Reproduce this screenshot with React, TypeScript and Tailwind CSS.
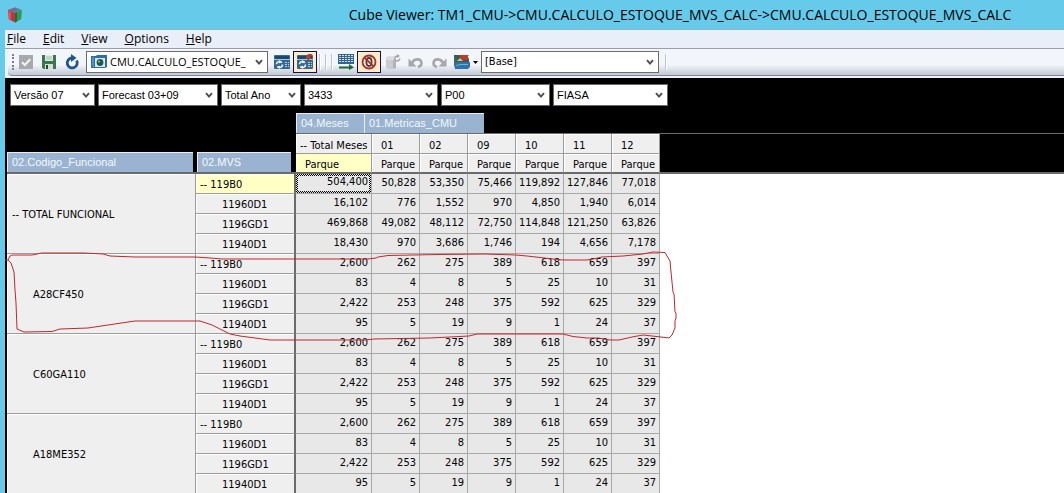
import type { ReactNode } from 'react'

// ─── Data ─────────────────────────────────────────────────────────────────────

type Block = {
  label: string
  total?: boolean
  rows: { name: string; values: string[] }[]
}

const months = ['01', '02', '09', '10', '11', '12']

const totals = [
  { name: '119B0', values: ['504,400', '50,828', '53,350', '75,466', '119,892', '127,846', '77,018'] },
  { name: '11960D1', values: ['16,102', '776', '1,552', '970', '4,850', '1,940', '6,014'] },
  { name: '1196GD1', values: ['469,868', '49,082', '48,112', '72,750', '114,848', '121,250', '63,826'] },
  { name: '11940D1', values: ['18,430', '970', '3,686', '1,746', '194', '4,656', '7,178'] },
]

const detail = [
  { name: '119B0', values: ['2,600', '262', '275', '389', '618', '659', '397'] },
  { name: '11960D1', values: ['83', '4', '8', '5', '25', '10', '31'] },
  { name: '1196GD1', values: ['2,422', '253', '248', '375', '592', '625', '329'] },
  { name: '11940D1', values: ['95', '5', '19', '9', '1', '24', '37'] },
]

const blocks: Block[] = [
  { label: 'TOTAL FUNCIONAL', total: true, rows: totals },
  { label: 'A28CF450', rows: detail },
  { label: 'C60GA110', rows: detail },
  { label: 'A18ME352', rows: detail },
]

const filters = [
  { name: 'Versão', value: 'Versão 07', width: 'w-[85px]' },
  { name: 'Cenário', value: 'Forecast 03+09', width: 'w-[120px]' },
  { name: 'Ano', value: 'Total Ano', width: 'w-[80px]' },
  { name: 'Conta', value: '3433', width: 'w-[134px]' },
  { name: 'Produto', value: 'P00', width: 'w-[109px]' },
  { name: 'Empresa', value: 'FIASA', width: 'w-[115px]' },
]

const menus = ['File', 'Edit', 'View', 'Options', 'Help']

// ─── Icons ────────────────────────────────────────────────────────────────────

function CubeIcon() {
  return (
    <svg className="h-4 w-4" viewBox="0 0 16 16">
      <path d="M8 0.5 15 3 8 6 1 3Z" fill="#5b7f9c" />
      <path d="M8 0.5 11 1.6 4.5 4.4 1 3Z" fill="#83688a" />
      <path d="M1 3 8 6V15.5L1.8 12.2Z" fill="#c9303a" />
      <path d="M15 3 8 6V15.5L14.2 12.2Z" fill="#2f9a55" />
      <path d="M1.5 4 4 5V12.5L2 11.5Z" fill="#e2555a" />
      <path d="M8 6 10 5.2V14.4L8 15.5Z" fill="#1d6b45" />
    </svg>
  )
}

function CheckIcon() {
  return (
    <svg className="h-4 w-4" viewBox="0 0 16 16">
      <rect x="1" y="1" width="14" height="14" fill="#a7a9ac" />
      <path d="M4 8.2 6.8 11 12.2 5.2" fill="none" stroke="#f4f4f4" strokeWidth="2" />
    </svg>
  )
}

function SaveIcon() {
  return (
    <svg className="h-4 w-4" viewBox="0 0 16 16">
      <path d="M1 1H15V15H2.5L1 13.5Z" fill="#387a4c" />
      <rect x="4" y="1" width="8" height="6" fill="#e3e9e4" />
      <path d="M5 3H11M5 5H11" stroke="#aebbb1" />
      <rect x="4" y="10" width="8" height="5" fill="#d5ded7" />
      <rect x="5" y="11" width="2" height="4" fill="#22482f" />
    </svg>
  )
}

function RefreshIcon() {
  return (
    <svg className="h-4 w-4" viewBox="0 0 16 16">
      <path d="M12.6 6.5A5 5 0 1 1 7.5 4" fill="none" stroke="#1e5591" strokeWidth="2.8" />
      <path d="M7 0 12.5 4 7 8Z" fill="#1e5591" />
    </svg>
  )
}

function ViewIcon() {
  return (
    <svg className="h-4 w-4 shrink-0" viewBox="0 0 16 16">
      <path d="M0 2H5L6 1H16V13L14 14H0Z" fill="#2c6fa8" />
      <rect x="4" y="4" width="10" height="9" fill="#dbe9ef" />
      <circle cx="9" cy="8.5" r="3.4" fill="#235a45" />
      <circle cx="8" cy="7.5" r="1.1" fill="#8fc1a2" />
      <path d="M2 3V13" stroke="#7cb4dd" />
    </svg>
  )
}

function RecalcIcon({ auto = false }: { auto?: boolean }) {
  return (
    <svg className="h-4 w-4" viewBox="0 0 16 16">
      <rect x="0" y="1" width="16" height="14" rx="1" fill="#356791" />
      <rect x="1" y="2" width="14" height="3" fill="#1d4870" />
      <path d="M0 5.5H16" stroke="#a4c8df" />
      <path d="M11 8.5H13M14 8.5H15M11 10.5H13M14 10.5H15M11 12.5H13M14 12.5H15" stroke="#b6d6e6" />
      <circle cx="5.5" cy="10.5" r="3" fill="none" stroke="#e6f2f8" strokeWidth="1.6" strokeDasharray="7 2.4" />
      <path d="M5 6 8 8 5 9.5ZM6 15 3 13 6 11.5Z" fill="#e6f2f8" />
      {auto && <path d="M15.5 0H11L8 4.5H11L8.5 8.5 15 3.5H12.5Z" fill="#b5402f" />}
    </svg>
  )
}

function ExportGridIcon() {
  return (
    <svg className="h-4 w-4" viewBox="0 0 16 16">
      <rect x="0" y="0" width="16" height="10" fill="#32648e" />
      <path d="M1 1.5H15M1 3.5H15M1 5.5H15M1 7.5H15" stroke="#d3e4ee" strokeDasharray="2 1" />
      <path d="M1 13.5H12" stroke="#17683b" strokeWidth="2" />
      <path d="M11 10 16 13.5 11 16Z" fill="#17683b" />
    </svg>
  )
}

function SuppressZeroIcon() {
  return (
    <svg className="h-4 w-4" viewBox="0 0 16 16">
      <ellipse cx="8" cy="8" rx="2.6" ry="4" fill="none" stroke="#41434b" strokeWidth="1.8" />
      <circle cx="8" cy="8" r="6.5" fill="none" stroke="#a92d31" strokeWidth="1.8" />
      <path d="M3.4 3.4 12.6 12.6" stroke="#a92d31" strokeWidth="1.8" />
    </svg>
  )
}

function DatabaseIcon() {
  return (
    <svg className="h-4 w-4" viewBox="0 0 16 16">
      <path d="M1 4V13C1 16 11 16 11 13V4Z" fill="#cbccd0" />
      <path d="M8 4H11V14L8 15Z" fill="#b2b3b8" />
      <ellipse cx="6" cy="4" rx="5" ry="2" fill="#dcdde0" />
      <path d="M14.8 4.5A2.5 2.5 0 1 1 12.5 2" fill="#eceef2" stroke="#a3a4a8" strokeWidth="1.4" />
      <path d="M12 0 15 2 12 4Z" fill="#a3a4a8" />
    </svg>
  )
}

function UndoIcon({ flip = false }: { flip?: boolean }) {
  return (
    <svg className={`h-4 w-4 ${flip ? '-scale-x-100' : ''}`} viewBox="0 0 16 16">
      <path d="M4 9.5C5 5 13.5 3 13.5 9.5 13.5 11.5 12 12.5 10 13" fill="none" stroke="#a5a7aa" strokeWidth="2.6" />
      <path d="M0.5 4.5V12.5H8.5Z" fill="#a5a7aa" />
    </svg>
  )
}

function ChartIcon() {
  return (
    <svg className="h-4 w-4" viewBox="0 0 16 16">
      <path d="M0 1H13L15 5V12H0Z" fill="#345a60" />
      <path d="M5 1H15L13 3 15 6H8Z" fill="#bd3a2c" />
      <path d="M0 3H3V10H0Z" fill="#2f6f63" />
      <path d="M3 7 6 4 9 7Z" fill="#e8c06a" />
      <path d="M0 10 4 8H16V13L14 15H1Z" fill="#2e74a8" />
      <path d="M2 11.5 6 10.5H14" fill="none" stroke="#6fb0d8" />
    </svg>
  )
}

// ─── Controls ─────────────────────────────────────────────────────────────────

function Dropdown({ label, value, className, icon }: { label: string; value: string; className: string; icon?: ReactNode }) {
  return (
    <div className={`relative flex h-[22px] shrink-0 items-center border border-[#6b6b6b] bg-white ${className}`}>
      {icon}
      <select aria-label={label} className="h-full min-w-0 flex-1 appearance-none bg-transparent pr-4 pl-[3px] outline-none">
        <option>{value}</option>
      </select>
      <svg className="pointer-events-none absolute right-1 h-[7px] w-2" viewBox="0 0 8 7">
        <path d="M1 1.2 4 4.6 7 1.2" fill="none" stroke="#505050" strokeWidth="2" />
      </svg>
    </div>
  )
}

function ToolButton({ label, active, children }: { label: string; active?: boolean; children: ReactNode }) {
  return (
    <button
      type="button"
      aria-label={label}
      className={`flex h-[22px] shrink-0 items-center justify-center border ${
        active ? 'w-6 border-[#10105c] bg-[#ffebc6]' : 'w-[23px] border-transparent'
      }`}
    >
      {children}
    </button>
  )
}

function Separator() {
  return <span className="h-4 w-[2px] shrink-0 border-r border-white bg-[#bfc4ce]" />
}

function DimensionTile({ className, children }: { className: string; children: ReactNode }) {
  return (
    <div className={`h-5 truncate border-t border-l border-[#e6edf5] bg-[#9ab3d0] pl-1 text-left leading-[19px] text-[#f4f8fc] ${className}`}>
      {children}
    </div>
  )
}

// ─── Toolbar ──────────────────────────────────────────────────────────────────

function Toolbar() {
  return (
    <div className="bg-[#eef3fa] pb-[2px] pl-[3px]">
      <div className="flex h-[27px] items-center rounded-bl border-b border-[#7f8797] bg-linear-to-b from-[#f2f5fa] from-60% to-[#c3c8d3] pl-1">
        <span className="h-4 w-[2px] shrink-0 border-l-2 border-dotted border-[#7b7f88]" />
        <ToolButton label="Apply"><CheckIcon /></ToolButton>
        <ToolButton label="Save"><SaveIcon /></ToolButton>
        <ToolButton label="Refresh"><RefreshIcon /></ToolButton>
        <Dropdown
          label="View name"
          value="CMU.CALCULO_ESTOQUE_"
          className="mr-[2px] ml-[3px] w-[182px] pl-1 font-['Open_Sans',sans-serif] text-[11px]"
          icon={<ViewIcon />}
        />
        <ToolButton label="Recalculate"><RecalcIcon /></ToolButton>
        <ToolButton label="Automatic recalculation" active><RecalcIcon auto /></ToolButton>
        <span className="flex gap-1 pr-px pl-[2px]">
          <Separator />
          <Separator />
          <Separator />
        </span>
        <ToolButton label="Slice to grid"><ExportGridIcon /></ToolButton>
        <ToolButton label="Suppress zeroes" active><SuppressZeroIcon /></ToolButton>
        <ToolButton label="Sandbox"><DatabaseIcon /></ToolButton>
        <ToolButton label="Undo"><UndoIcon /></ToolButton>
        <ToolButton label="Redo"><UndoIcon flip /></ToolButton>
        <ToolButton label="Chart"><ChartIcon /></ToolButton>
        <svg className="h-[3px] w-[5px] shrink-0" viewBox="0 0 5 3">
          <path d="M0 0H5L2.5 3Z" fill="#000" />
        </svg>
        <Dropdown label="Sandbox name" value="[Base]" className="mr-[6px] ml-[3px] w-[178px]" />
        <Separator />
      </div>
    </div>
  )
}

// ─── Grid ─────────────────────────────────────────────────────────────────────

const headCell = 'border-r border-[#9c9c9c] bg-[#efefef] p-0 pt-[3px] text-left font-normal shadow-[inset_1px_1px_0_#fff] whitespace-nowrap'
const valueCell = 'border-r border-b border-[#a8a8a8] bg-[#e8e8e8] p-0 text-right leading-[15px]'

function CubeGrid() {
  return (
    <table className="w-full table-fixed border-separate border-spacing-0">
      <colgroup>
        <col className="w-[189px]" />
        <col className="w-[100px]" />
        <col className="w-[76px]" />
        {months.map((m) => <col key={m} className="w-12" />)}
        <col />
      </colgroup>
      <thead className="bg-black leading-[15px]">
        <tr className="h-[21px]">
          <td colSpan={2} className="p-0" />
          <th colSpan={8} className="border-b border-[#6b6b6b] p-0 font-['Liberation_Sans',Arial,sans-serif] font-normal">
            <div className="flex">
              <DimensionTile className="w-[68px]">04.Meses</DimensionTile>
              <DimensionTile className="w-[120px]">01.Metricas_CMU</DimensionTile>
            </div>
          </th>
        </tr>
        <tr className="h-5">
          <th rowSpan={2} className="border-b-2 border-[#6b6b6b] p-0 pr-[3px] align-bottom font-['Liberation_Sans',Arial,sans-serif] font-normal">
            <DimensionTile className="w-full">02.Codigo_Funcional</DimensionTile>
          </th>
          <th rowSpan={2} className="border-b-2 border-[#6b6b6b] p-0 pr-[5px] pl-px align-bottom font-['Liberation_Sans',Arial,sans-serif] font-normal">
            <DimensionTile className="w-full">02.MVS</DimensionTile>
          </th>
          <th className={`${headCell} border-b pl-1`}>-- Total Meses</th>
          {months.map((m) => <th key={m} className={`${headCell} border-b pl-[9px]`}>{m}</th>)}
          <td className="p-0" />
        </tr>
        <tr className="h-5">
          <th className="border-r border-b-2 border-r-[#9c9c9c] border-b-[#6b6b6b] bg-[#ffffc6] p-0 pt-[3px] pl-[9px] text-left font-normal">Parque</th>
          {months.map((m) => (
            <th key={m} className={`${headCell} border-b-2 border-b-[#6b6b6b] pl-[9px]`}>Parque</th>
          ))}
          <td className="border-b-2 border-[#6b6b6b] p-0" />
        </tr>
      </thead>
      <tbody className="leading-4">
        {blocks.map((block) =>
          block.rows.map((row, r) => {
            const first = block.total && r === 0
            return (
              <tr key={row.name} className="h-5">
                {r === 0 && (
                  <th rowSpan={4} className={`${headCell} border-b ${block.total ? 'pl-[5px]' : 'pl-[26px]'}`}>
                    {block.total ? `-- ${block.label}` : block.label}
                  </th>
                )}
                <th
                  className={`border-r-2 border-b border-r-[#6b6b6b] border-b-[#9c9c9c] p-0 pt-[3px] text-left font-normal shadow-[inset_1px_1px_0_#fff] ${
                    first ? 'bg-[#ffffc6]' : 'bg-[#efefef]'
                  } ${r === 0 ? 'pl-1' : 'pl-[26px]'}`}
                >
                  {r === 0 ? `-- ${row.name}` : row.name}
                </th>
                {row.values.map((value, c) =>
                  first && c === 0 ? (
                    <td key={c} className={valueCell}>
                      {/* selected cell: checkered focus frame */}
                      <div className="bg-[repeating-conic-gradient(#000_0_25%,#e8e8e8_0_50%)] bg-size-[2px_2px] p-[2px]">
                        <div className="bg-[#e8e8e8] pr-px pb-[3px] leading-3">{value}</div>
                      </div>
                    </td>
                  ) : (
                    <td key={c} className={`${valueCell} pr-[3px] pb-[2px]`}>{value}</td>
                  )
                )}
                <td className="bg-white p-0" />
              </tr>
            )
          })
        )}
      </tbody>
    </table>
  )
}

// Freehand pen outline around the A28CF450 block
function PenMark() {
  return (
    <svg className="pointer-events-none absolute top-0 left-0 h-[240px] w-[680px] overflow-visible" viewBox="7 113 680 240">
      <path
        d="M5 260 8 260 10 256 12 255 32 255 42 253 83 253 103 254 110 256 135 257 195 257 210 258 222 259 368 259 376 258 378 257 388 255.5 438 254.5 484 254 516 255 527 256 540 257.5 553 259 563 260 587 260 598 258 602 257 623 256 633 255 643 254 653 252 665 252.5 667 256 670 261 671 272 673 292 674 294 675 312 676 313 676 318 675 321 675 328 672 335 669 338 661 337 652 336 643 335 632 337 619 340 610 340 598 338 587 338 573 336.5 563 334 477 334 469 336 450 337 430 338 374 339 365 340 270 340 240 336 230 334 220 329 212 325 200 321 135 321 108 325 88 328 60 329 52 331.5 24 332 17 329 16 303 15 290 14 272 11 263 8 260"
        fill="none"
        stroke="#c1272d"
      />
    </svg>
  )
}

// ─── Main Component ───────────────────────────────────────────────────────────

export default function App() {
  return (
    <div className="flex h-screen flex-col overflow-hidden bg-[#66cbea] font-['DejaVu_Sans_Condensed','DejaVu_Sans',sans-serif] text-[11px] text-black">
      <header className="flex h-[29px] shrink-0 items-center px-[7px]">
        <CubeIcon />
        <h1 className="flex-1 truncate pl-[280px] text-center font-['Open_Sans',sans-serif] text-[14px]">
          Cube Viewer: TM1_CMU-&gt;CMU.CALCULO_ESTOQUE_MVS_CALC-&gt;CMU.CALCULO_ESTOQUE_MVS_CALC
        </h1>
      </header>

      <div className="flex min-h-0 flex-1 flex-col pl-[5px]">
        <nav className="flex h-5 shrink-0 items-center gap-[17px] border-t border-b border-t-[#8fb7c9] border-b-[#9a9ea6] bg-[#e9eff8] pl-[2px] font-['Open_Sans',sans-serif] text-[12px]">
          {menus.map((menu) => (
            <button key={menu} type="button" className="leading-[18px]">
              <span className="underline">{menu[0]}</span>{menu.slice(1)}
            </button>
          ))}
        </nav>
        <Toolbar />

        <main className="min-h-0 flex-1 overflow-hidden bg-white">
          <div className="flex gap-[3px] bg-black pt-[6px] pb-[7px] pl-[5px] font-['Liberation_Sans',Arial,sans-serif]">
            {filters.map((f) => (
              <Dropdown key={f.name} label={f.name} value={f.value} className={f.width} />
            ))}
          </div>
          <div className="relative border-l-2 border-black">
            <CubeGrid />
            <PenMark />
          </div>
        </main>
      </div>
    </div>
  )
}
